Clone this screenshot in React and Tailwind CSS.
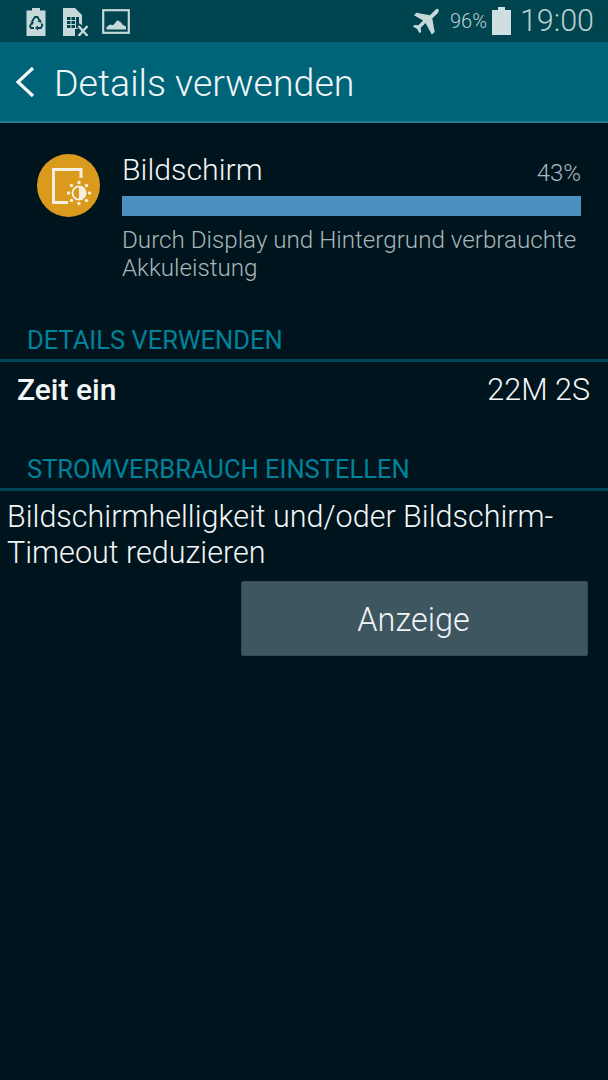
const StatusIcons = () => (
    <div className="flex items-center">
        {/* Recycle battery */}
        <svg width="20" height="28" viewBox="0 0 20 28" className="ml-[26px] mt-[2px]">
            <path fill="#c6d8da" d="M6 0h8v2.500h5.500V28H.5V2.500H6z" />
            <path fill="none" stroke="#00444f" strokeWidth="1.800" d="M6 13.500l3-4.500h2.500l2 3.500M15.500 15.500l.8 2-1.500 2.500H11M8 20H5l-1-2 1.800-3" />
            <path fill="#00444f" d="M11.500 13.500l3.500-2 .5 3.500zM12 17.500v5l-3-2.500zM4.500 13l3.500 1 -1.500 3z" />
        </svg>
        {/* Sim blocked */}
        <svg width="26" height="28" viewBox="0 0 26 28" className="ml-[17px] mt-[2px]">
            <path fill="#c6d8da" d="M0 0h12l7 7v14h-7v7H0z" />
            <path fill="#00444f" d="M4 9h3.500v3H4zM8.500 9H12v3H8.500zM13 9h3v11h-3zM4 13h3.500v3H4zM8.500 13H12v3H8.500zM4 17h3.500v3H4zM8.500 17H12v3H8.500z" />
            <path fill="none" stroke="#00444f" strokeWidth="5" d="M15 17l10 11M25 17L15 28" />
            <path fill="none" stroke="#c6d8da" strokeWidth="2.400" d="M15.500 18l9 10M24.500 18l-9 10" />
        </svg>
        {/* Picture */}
        <svg width="28" height="25" viewBox="0 0 28 25" className="ml-[13px]">
            <rect x="1.200" y="1.200" width="25.600" height="22.600" fill="none" stroke="#c6d8da" strokeWidth="2.200" />
            <path fill="#c6d8da" d="M4.500 20.500v-2.500l3.500-2.500 3 .7 4.500-5 3 1.800 2.500 3 3 1.500v3z" />
        </svg>
    </div>
)

const SectionHeader = ({ children }) => (
    <div className="border-b-[3px] border-[#00465a]">
        <div className="pl-[27px] h-[32px] pb-[5px] text-[25.500px] leading-[26px] text-[#00829b]">{children}</div>
    </div>
)

const App = () => {
    return (
        <div className="w-[608px] h-[1080px] bg-[#00141d] flex flex-col font-['Roboto',sans-serif] overflow-hidden">
            {/* Status bar */}
            <div className="h-[42px] bg-[#004450] flex items-center justify-between shrink-0">
                <StatusIcons />
                <div className="flex items-center text-[#b9d0d4] pr-[14px]">
                    <svg width="27" height="27" viewBox="0 0 28 28">
                        <path fill="#c6d8da" d="M26 1c1.500 1 .5 3.500-1 5l-5 5 2.500 14-3 2.500-6.500-12-5 5 .5 4-1.700 1.700-2.500-4.500-4.500-2.500 1.700-1.700 4 .5 5-5L1 7.500 3.500 5l14 2.500 5-5c1.500-1.500 3-2 3.500-1.500z" />
                    </svg>
                    <span className="text-[20px] font-light ml-[10px]">96%</span>
                    <svg width="19" height="28" viewBox="0 0 19 28" className="ml-[5px]">
                        <path fill="#cfdfe1" d="M6 0h7v3h6v25H0V3h6z" />
                    </svg>
                    <span className="text-[30.500px] font-light ml-[9px]">19:00</span>
                </div>
            </div>

            {/* Action bar */}
            <div className="h-[81px] bg-[#006479] border-b-2 border-[#1f7d8f] flex items-center shrink-0">
                <svg width="20" height="32" viewBox="0 0 20 32" className="ml-[15px]">
                    <path fill="none" stroke="#f4f8f8" strokeWidth="3.200" d="M18 2L3 16l15 14" />
                </svg>
                <h1 className="ml-[19px] pt-[3px] text-[37.500px] leading-[48px] font-light text-[#f2f6f7]">Details verwenden</h1>
            </div>

            {/* Usage summary */}
            <div className="flex pl-[37px] pt-[31px] h-[204px] shrink-0">
                <svg width="63" height="63" viewBox="0 0 63 63" className="shrink-0">
                    <circle cx="31.500" cy="31.500" r="31.500" fill="#d99a1e" />
                    <path fill="none" stroke="#f6efe0" strokeWidth="3" d="M44 24V15.500H16.500v33H31" />
                    <circle cx="42" cy="39" r="6.500" fill="#d99a1e" stroke="#f6efe0" strokeWidth="2" />
                    <path fill="#f6efe0" d="M42 32.500a6.500 6.500 0 0 1 0 13z" />
                    <g fill="#f6efe0">
                        <circle cx="42" cy="28.500" r="1.700" />
                        <circle cx="42" cy="49.500" r="1.700" />
                        <circle cx="31.500" cy="39" r="1.700" />
                        <circle cx="52.500" cy="39" r="1.700" />
                        <circle cx="34.500" cy="31.500" r="1.700" />
                        <circle cx="49.500" cy="31.500" r="1.700" />
                        <circle cx="34.500" cy="46.500" r="1.700" />
                        <circle cx="49.500" cy="46.500" r="1.700" />
                    </g>
                </svg>
                <div className="ml-[22px] w-[459px] shrink-0">
                    <div className="flex items-end justify-between h-[34px]">
                        <span className="text-[30.300px] font-light leading-[32px] pb-[2px] text-[#f1f5f6]">Bildschirm</span>
                        <span className="text-[24px] font-light leading-[30px] text-[#a9b8bc]">43%</span>
                    </div>
                    <div className="mt-[8px] h-[20px] bg-[#4b90c1]" />
                    <p className="mt-[10px] text-[24.200px] font-light leading-[28px] text-[#a7b6ba] w-[470px]">
                        Durch Display und Hintergrund verbrauchte Akkuleistung
                    </p>
                </div>
            </div>

            <SectionHeader>DETAILS VERWENDEN</SectionHeader>

            <div className="flex justify-between h-[94px] pl-[17px] pr-[18px] pt-[10px] text-[#f4f7f8] text-[30px] leading-[36px] shrink-0">
                <span className="font-medium">Zeit ein</span>
                <span className="font-light text-[30.500px]">22M 2S</span>
            </div>

            <SectionHeader>STROMVERBRAUCH EINSTELLEN</SectionHeader>

            <p className="pl-[7px] pr-[20px] pt-[8px] text-[30.500px] font-light leading-[36px] text-[#f4f7f8]">
                Bildschirmhelligkeit und/oder Bildschirm-Timeout reduzieren
            </p>

            <div className="flex justify-end pr-[20px] pt-[10px]">
                <div className="w-[347px] h-[75px] bg-[#3e5660] rounded-[2px] border border-[#334b55] flex items-center justify-center pt-[3px] pr-[2px] text-[32.400px] font-light text-[#f0f4f5]">
                    Anzeige
                </div>
            </div>
        </div>
    )
}

export default App
